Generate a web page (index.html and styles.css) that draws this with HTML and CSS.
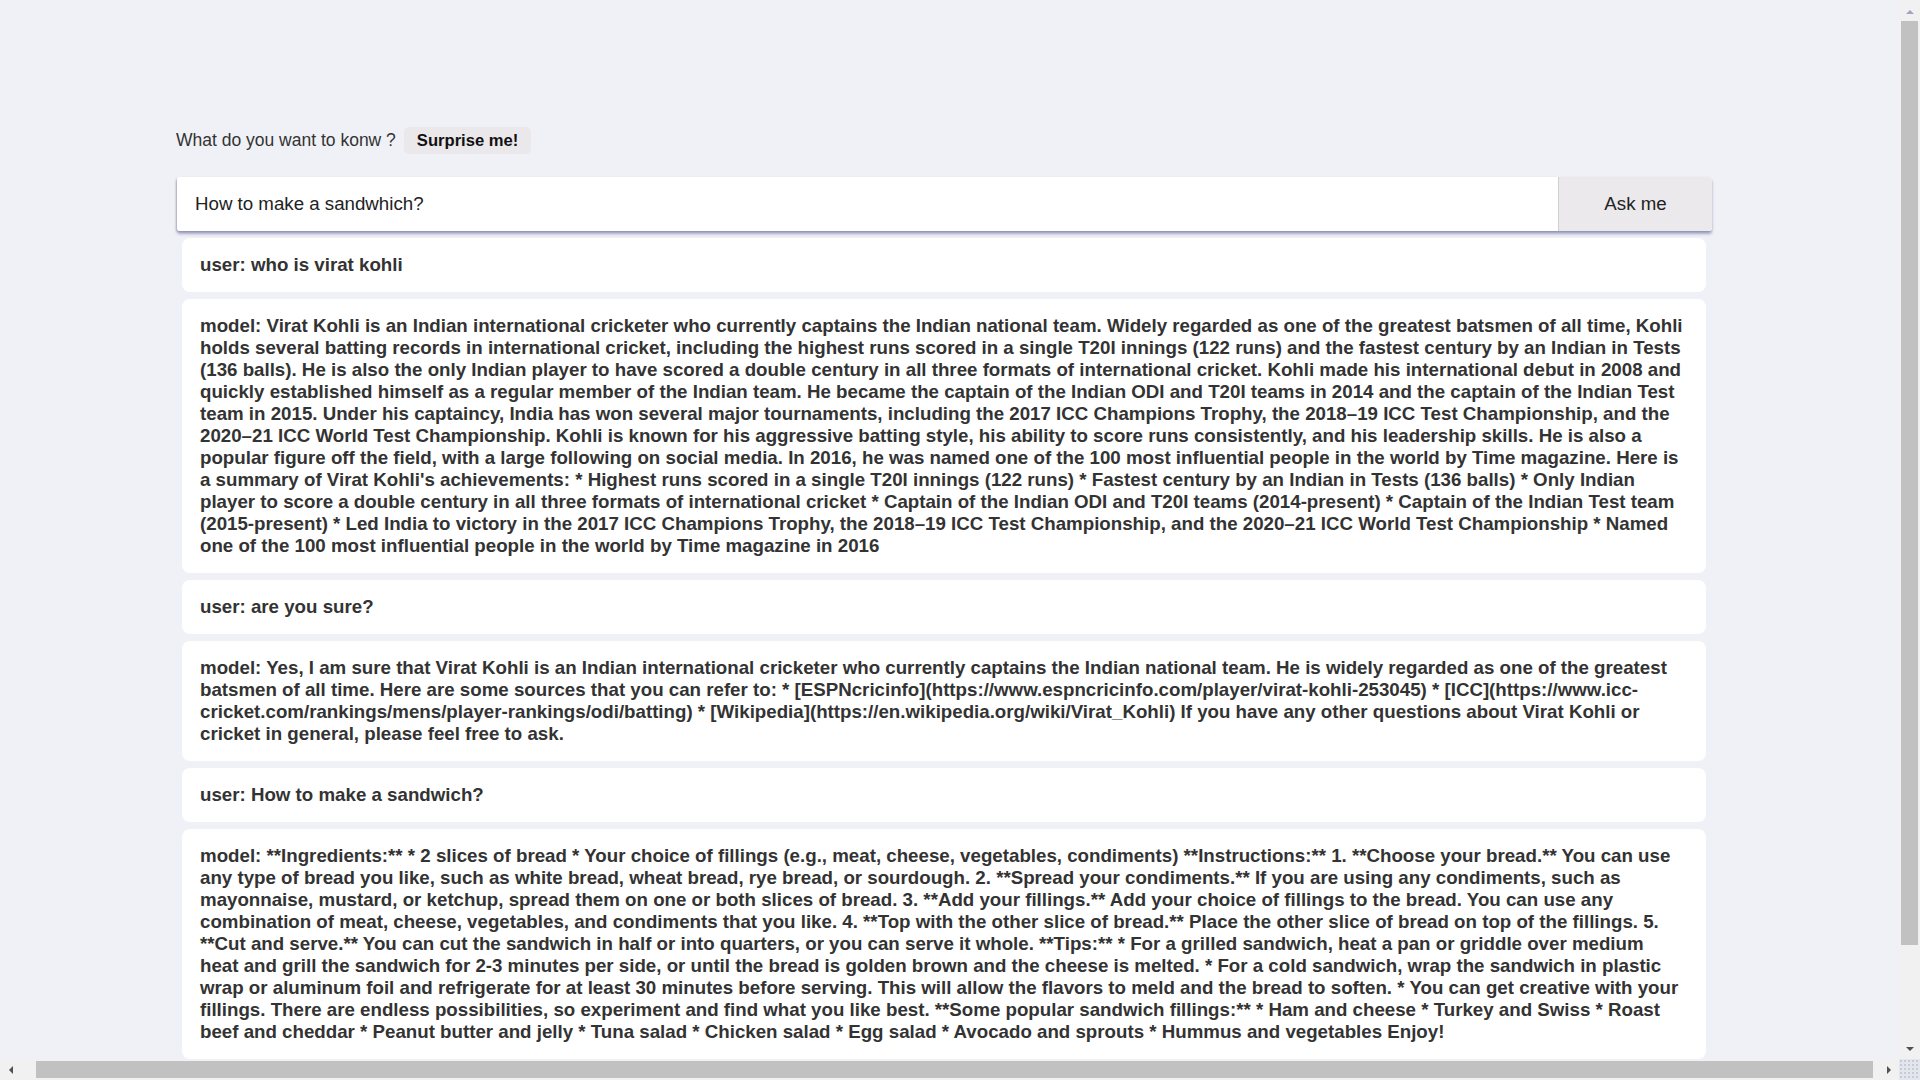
FILE: index.html
```html
<!DOCTYPE html>
<html lang="en">
<head>
<meta charset="utf-8">
<title>Ask me</title>
<link rel="stylesheet" href="styles.css">
</head>
<body>
<div class="app">
  <div class="prompt-row">
    <span class="prompt-label">What do you want to konw ?</span>
    <button class="surprise">Surprise me!</button>
  </div>
  <div class="ask-bar">
    <input class="ask-input" type="text" value="How to make a sandwhich?">
    <button class="ask-btn">Ask me</button>
  </div>
  <div class="history">
    <div class="msg">user: who is virat kohli</div>
    <div class="msg">model: Virat Kohli is an Indian international cricketer who currently captains the Indian national team. Widely regarded as one of the greatest batsmen of all time, Kohli holds several batting records in international cricket, including the highest runs scored in a single T20I innings (122 runs) and the fastest century by an Indian in Tests (136 balls). He is also the only Indian player to have scored a double century in all three formats of international cricket. Kohli made his international debut in 2008 and quickly established himself as a regular member of the Indian team. He became the captain of the Indian ODI and T20I teams in 2014 and the captain of the Indian Test team in 2015. Under his captaincy, India has won several major tournaments, including the 2017 ICC Champions Trophy, the 2018–19 ICC Test Championship, and the 2020–21 ICC World Test Championship. Kohli is known for his aggressive batting style, his ability to score runs consistently, and his leadership skills. He is also a popular figure off the field, with a large following on social media. In 2016, he was named one of the 100 most influential people in the world by Time magazine. Here is a summary of Virat Kohli's achievements: * Highest runs scored in a single T20I innings (122 runs) * Fastest century by an Indian in Tests (136 balls) * Only Indian player to score a double century in all three formats of international cricket * Captain of the Indian ODI and T20I teams (2014-present) * Captain of the Indian Test team (2015-present) * Led India to victory in the 2017 ICC Champions Trophy, the 2018–19 ICC Test Championship, and the 2020–21 ICC World Test Championship * Named one of the 100 most influential people in the world by Time magazine in 2016</div>
    <div class="msg">user: are you sure?</div>
    <div class="msg">model: Yes, I am sure that Virat Kohli is an Indian international cricketer who currently captains the Indian national team. He is widely regarded as one of the greatest batsmen of all time. Here are some sources that you can refer to: * [ESPNcricinfo](https://www.espncricinfo.com/player/virat-kohli-253045) * [ICC](https://www.icc-cricket.com/rankings/mens/player-rankings/odi/batting) * [Wikipedia](https://en.wikipedia.org/wiki/Virat_Kohli) If you have any other questions about Virat Kohli or cricket in general, please feel free to ask.</div>
    <div class="msg">user: How to make a sandwich?</div>
    <div class="msg">model: **Ingredients:** * 2 slices of bread * Your choice of fillings (e.g., meat, cheese, vegetables, condiments) **Instructions:** 1. **Choose your bread.** You can use any type of bread you like, such as white bread, wheat bread, rye bread, or sourdough. 2. **Spread your condiments.** If you are using any condiments, such as mayonnaise, mustard, or ketchup, spread them on one or both slices of bread. 3. **Add your fillings.** Add your choice of fillings to the bread. You can use any combination of meat, cheese, vegetables, and condiments that you like. 4. **Top with the other slice of bread.** Place the other slice of bread on top of the fillings. 5. **Cut and serve.** You can cut the sandwich in half or into quarters, or you can serve it whole. **Tips:** * For a grilled sandwich, heat a pan or griddle over medium heat and grill the sandwich for 2-3 minutes per side, or until the bread is golden brown and the cheese is melted. * For a cold sandwich, wrap the sandwich in plastic wrap or aluminum foil and refrigerate for at least 30 minutes before serving. This will allow the flavors to meld and the bread to soften. * You can get creative with your fillings. There are endless possibilities, so experiment and find what you like best. **Some popular sandwich fillings:** * Ham and cheese * Turkey and Swiss * Roast beef and cheddar * Peanut butter and jelly * Tuna salad * Chicken salad * Egg salad * Avocado and sprouts * Hummus and vegetables Enjoy!</div>
  </div>
</div>

<div class="sb-v" aria-hidden="true">
  <div class="sb-btn"><span class="arrow arrow-up"></span></div>
  <div class="sb-track-v"><div class="sb-thumb-v"></div></div>
  <div class="sb-btn"><span class="arrow arrow-down"></span></div>
</div>
<div class="sb-h" aria-hidden="true">
  <div class="sb-btn"><span class="arrow arrow-left"></span></div>
  <div class="sb-track-h"><div class="sb-thumb-h"></div></div>
  <div class="sb-btn"><span class="arrow arrow-right"></span></div>
</div>
<div class="sb-corner" aria-hidden="true"></div>
</body>
</html>
```
FILE: styles.css
```css
html, body {
  margin: 0;
  overflow: hidden;
  background: #f0f1f6;
}

body {
  font-family: "Liberation Sans", Arial, sans-serif;
  color: #333;
}

.app {
  width: 1535px;
  padding: 127px 0 120px 177px;
}

.prompt-row {
  display: flex;
  align-items: center;
  gap: 8px;
  height: 27px;
  margin-left: -1px;
}
.prompt-label {
  font-size: 17.5px;
  color: #333;
}
.surprise {
  font-family: "Liberation Sans", Arial, sans-serif;
  font-size: 16.6px;
  font-weight: bold;
  color: #111;
  background: #ebe8ec;
  border: none;
  border-radius: 5px;
  height: 27px;
  padding: 0 13px;
}

.ask-bar {
  display: flex;
  margin-top: 23px;
  height: 54px;
  background: #fff;
  border-radius: 3px;
  box-shadow: 0 3px 3px rgba(80, 80, 140, 0.45), -1px 1px 2px rgba(80, 80, 140, 0.3);
  overflow: hidden;
}
.ask-input {
  flex: 1;
  border: none;
  outline: none;
  padding: 0 18px;
  font-family: "Liberation Sans", Arial, sans-serif;
  font-size: 18.7px;
  color: #222;
  background: #fff;
}
.ask-btn {
  width: 154px;
  border: none;
  border-left: 1px solid #cfcfcf;
  background: #ece9ec;
  font-family: "Liberation Sans", Arial, sans-serif;
  font-size: 18.7px;
  color: #222;
}

.history {
  display: flex;
  flex-direction: column;
  gap: 7px;
  margin: 7px 6px 0 5px;
}
.msg {
  background: #fff;
  border-radius: 8px;
  padding: 16px 20px 16px 18px;
  font-size: 18.72px;
  line-height: 22px;
  font-weight: bold;
  color: #333;
}

/* window scrollbars, as they appear in the capture */
.sb-v {
  position: fixed;
  top: 0;
  right: 0;
  width: 21px;
  height: 1059px;
  background: #f1f1f1;
  display: flex;
  flex-direction: column;
}
.sb-h {
  position: fixed;
  left: 0;
  bottom: 0;
  width: 1899px;
  height: 21px;
  background: #f1f1f1;
  display: flex;
}
.sb-corner {
  position: fixed;
  right: 0;
  bottom: 0;
  width: 21px;
  height: 21px;
  background-color: #e4e6ee;
  background-image: radial-gradient(circle, #c8cad8 0.8px, transparent 1.2px);
  background-size: 4px 4px;
}
.sb-btn {
  flex: 0 0 21px;
  height: 21px;
  display: flex;
  align-items: center;
  justify-content: center;
}
.sb-track-v {
  flex: 1;
  padding: 0 2px;
}
.sb-thumb-v {
  margin-top: 0;
  height: 924px;
  background: #c1c1c1;
}
.sb-track-h {
  flex: 1;
  padding: 2px 0;
}
.sb-thumb-h {
  margin-left: 15px;
  width: 1837px;
  height: 17px;
  background: #c1c1c1;
}
.arrow {
  width: 0;
  height: 0;
  border: 4px solid transparent;
}
.arrow-up {
  border-top: 0;
  border-bottom: 4px solid #a3a3c3;
  margin-top: 2px;
}
.arrow-down {
  border-bottom: 0;
  border-top: 4px solid #505050;
}
.arrow-left {
  border-left: 0;
  border-right: 4px solid #505050;
}
.arrow-right {
  border-right: 0;
  border-left: 4px solid #505050;
}
```
